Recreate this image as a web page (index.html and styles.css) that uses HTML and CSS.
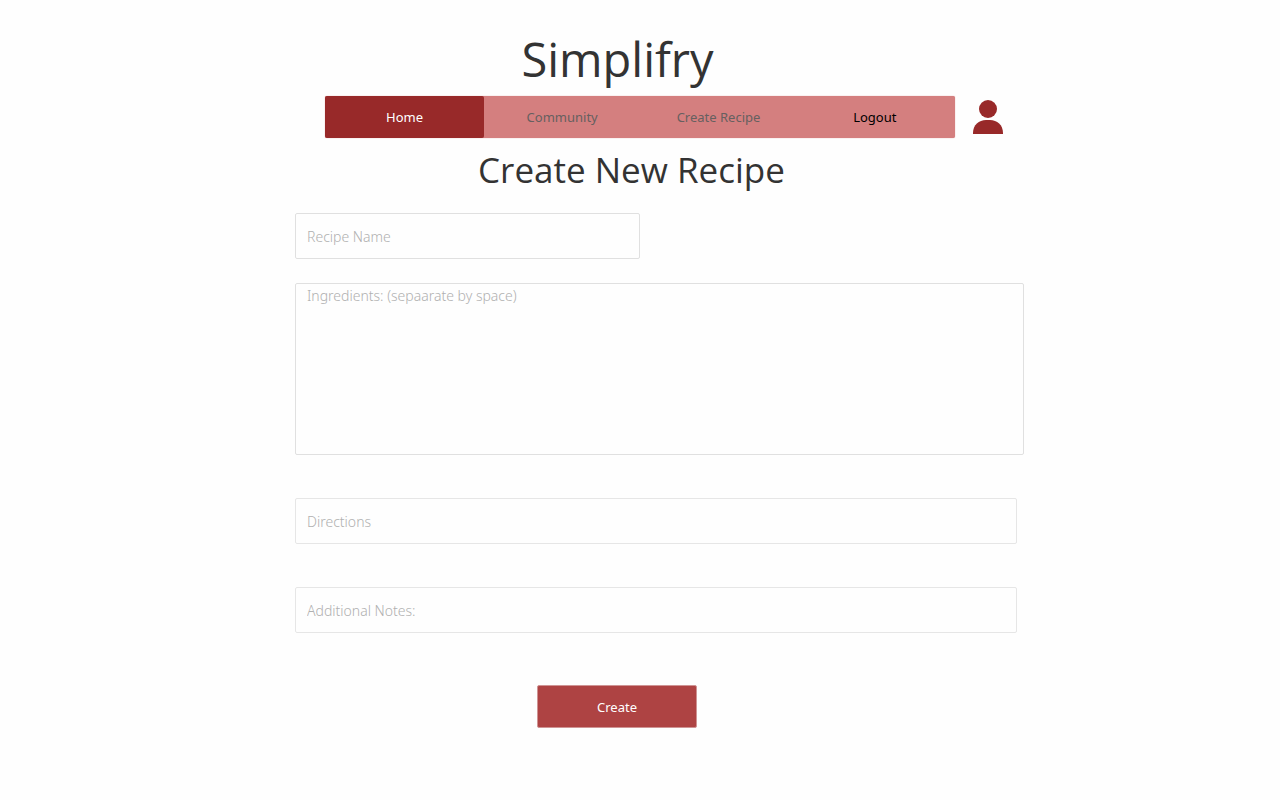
FILE: index.html
```
<!DOCTYPE html>
<html lang="en">
<head>
<meta charset="utf-8">
<title>Simplifry</title>
<link rel="stylesheet" href="styles.css">
</head>
<body>
<div class="page">
  <header class="header">
    <p class="brand">Simplifry</p>
    <div class="bar">
      <nav class="nav">
        <a class="nav-link active" href="#">Home</a>
        <a class="nav-link" href="#">Community</a>
        <a class="nav-link" href="#">Create Recipe</a>
        <a class="nav-link logout" href="#">Logout</a>
      </nav>
      <a class="profile" href="#" aria-label="Profile">
        <svg width="30" height="34" viewBox="0 0 30 34" fill="#982929"><circle cx="15" cy="9" r="9"/><path d="M0 34v-1C0 25 6 20 13 20h4c7 0 13 5 13 13v1z"/></svg>
      </a>
    </div>
  </header>
  <main>
    <h1 class="title">Create New Recipe</h1>
    <form class="form">
      <input class="field name" type="text" placeholder="Recipe Name" aria-label="Recipe Name">
      <textarea class="field ingredients" placeholder="Ingredients: (sepaarate by space)" aria-label="Ingredients"></textarea>
      <input class="field directions" type="text" placeholder="Directions" aria-label="Directions">
      <input class="field notes" type="text" placeholder="Additional Notes:" aria-label="Additional Notes">
      <button class="create" type="button">Create</button>
    </form>
  </main>
</div>
</body>
</html>
```
FILE: styles.css
```
* { box-sizing: border-box; }
body {
  margin: 0;
  background: #fefefe;
  color: #333;
  font-family: "Open Sans", sans-serif;
}
.page {
  margin: 0 20% 0 295px;
  padding: 27px 0 40px;
}
.header { display: flex; flex-direction: column; }
.brand {
  margin: 0;
  padding-right: 84px;
  font-size: 47px;
  line-height: 64px;
  text-align: center;
}
.bar { display: flex; align-items: center; gap: 18px; padding: 5px 21px 0 30px; }
.nav {
  display: flex;
  flex: 1;
  padding-right: 2px;
  background: #d47f7f;
  border-radius: 2px;
  box-shadow: 0 0 1px #d47f7f;
}
.nav-link {
  flex: 1;
  color: #666060;
  font-family: "Noto Sans", sans-serif;
  font-size: 13px;
  line-height: 42px;
  text-align: center;
  text-decoration: none;
}
.active { flex: 0 0 159px; color: #fff; background: #982929; border-radius: 2px; }
.logout { color: #000; }
.profile { display: flex; }
.title {
  margin: 8px 0 0;
  padding-right: 56px;
  font-size: 35px;
  font-weight: 400;
  line-height: 48px;
  text-align: center;
}
.form { display: flex; flex-direction: column; align-items: flex-start; margin-top: 19px; }
.field {
  width: 99%;
  height: 46px;
  padding: 0 11px;
  border: 1px solid #e0e0e0;
  border-radius: 2px;
  background: #fefefe;
  font: 300 14px/24px "Noto Sans", sans-serif;
  color: #333;
}
.field::placeholder { color: #b0b0b0; opacity: 1; }
.name { width: 345px; max-width: 100%; }
.ingredients { width: 100%; height: 172px; margin-top: 24px; resize: none; }
.directions, .notes { margin-top: 43px; border-color: #e6e6e6; }
.create {
  width: 160px;
  height: 43px;
  margin: 52px 0 0 242px;
  border: 1px solid #cf9494;
  border-radius: 2px;
  background: #ae4343;
  color: #fff;
  font: 400 13px "Noto Sans", sans-serif;
}
```
